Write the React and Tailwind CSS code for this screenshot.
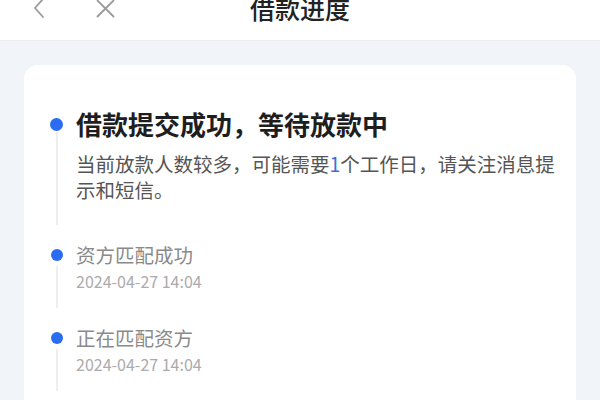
import React from "react";

const font = { fontFamily: '"Noto Sans CJK SC", "Noto Sans", sans-serif' };

function Item({ dotSize, title, date, titleClass, pb, dotMt, lineMt, children }) {
  return (
    <div className="flex">
      <div className="flex w-[13px] shrink-0 flex-col items-center">
        <div className={`${dotMt} ${dotSize} shrink-0 rounded-full bg-[#2c6cf2]`} />
        <div className={`${lineMt} mb-[16px] w-[2px] flex-1 bg-[#eceef1]`} />
      </div>
      <div className={`ml-[13px] flex-1 ${pb}`}>
        <div className={titleClass}>{title}</div>
        {date && (
          <div className="text-[16px] leading-[26px] text-[#ababab]">{date}</div>
        )}
        {children}
      </div>
    </div>
  );
}

export default function App() {
  return (
    <div className="h-[400px] w-[600px] overflow-hidden bg-[#f1f4f8]" style={font}>
      <div className="h-[41px] border-b border-[#eceef1] bg-white">
        <div className="grid h-[16px] grid-cols-[1fr_auto_1fr] grid-rows-[16px] items-center">
          <div className="flex items-center">
            <svg className="ml-[33px]" width="12" height="22" viewBox="0 0 12 22" fill="none">
              <path d="M10 2 L2 11 L10 20" stroke="#9a9a9a" strokeWidth="1.8" strokeLinecap="round" strokeLinejoin="round" />
            </svg>
            <svg className="ml-[51px]" width="19" height="19" viewBox="0 0 19 19" fill="none">
              <path d="M1.5 1.5 L17.5 17.5 M17.5 1.5 L1.5 17.5" stroke="#9a9a9a" strokeWidth="1.8" strokeLinecap="round" />
            </svg>
          </div>
          <div className="text-[25px] font-medium leading-[30px] text-[#222]">借款进度</div>
          <div />
        </div>
      </div>
      <div className="px-[24px] pt-[24px]">
        <div className="rounded-t-[14px] bg-white pl-[26px] pr-[14px] pt-[42px]">
          <Item
            dotSize="h-[13px] w-[13px]"
            dotMt="mt-[11px]"
            lineMt="mt-[1px]"
            pb="pb-[38px]"
            title="借款提交成功，等待放款中"
            titleClass="text-[26px] font-bold leading-[34px] text-[#1e1e1e]"
          >
            <div className="mt-[10px] text-[19.5px] leading-[26px] text-[#555]">
              当前放款人数较多，可能需要<span className="text-[#3b6fd8]">1</span>个工作日，请关注消息提示和短信。
            </div>
          </Item>
          <Item
            dotSize="h-[12px] w-[12px]"
            dotMt="mt-[8px]"
            lineMt="mt-[5px]"
            pb="pb-[30px]"
            title="资方匹配成功"
            date="2024-04-27 14:04"
            titleClass="mt-px text-[19.5px] leading-[26px] text-[#8a8a8a]"
          />
          <Item
            dotSize="h-[12px] w-[12px]"
            dotMt="mt-[8px]"
            lineMt="mt-[5px]"
            pb="pb-[30px]"
            title="正在匹配资方"
            date="2024-04-27 14:04"
            titleClass="mt-px text-[19.5px] leading-[26px] text-[#8a8a8a]"
          />
        </div>
      </div>
    </div>
  );
}
